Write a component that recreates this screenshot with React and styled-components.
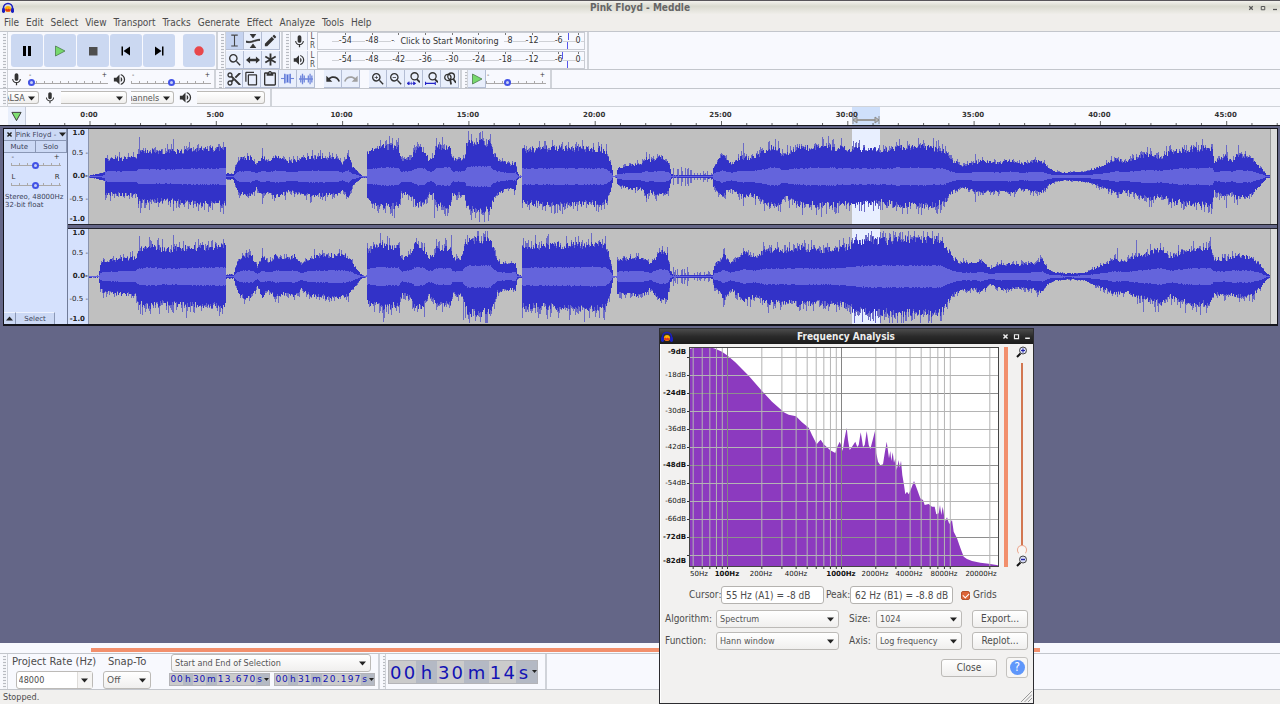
import { useState } from 'react';
import styled, { createGlobalStyle } from 'styled-components';
import { MdMic, MdVolumeUp, MdContentCut, MdContentCopy, MdContentPaste, MdEdit, MdSearch, MdZoomIn, MdZoomOut, MdUndo, MdRedo } from 'react-icons/md';

const MENU = ['File', 'Edit', 'Select', 'View', 'Transport', 'Tracks', 'Generate', 'Effect', 'Analyze', 'Tools', 'Help'];
const DB_MARKS = [-54, -48, -42, -36, -30, -24, -18, -12, -6];
// what is left of the marks beside the monitoring button
const MONITOR_MARKS = { '-42': '-', '-36': '', '-30': '', '-24': '', '-18': '8' };

// the clip starts at window pixel 89 and is 1181 samples wide
const CLIP_START = 89;
const CLIP_WIDTH = 1181;
const CHANNEL_HEIGHT = 95;
const MINUTE = 25.26;
const SELECTION = { start: 763, width: 28 };

// [position, peak height] pairs of each channel's outline
const LEFT_PEAKS = [
    [89, 1], [104, 4], [105, 18], [136, 19], [138, 26], [150, 26], [165, 25], [200, 28], [225, 28], [226, 3], [233, 3], [238, 17],
    [250, 20], [256, 12], [262, 20], [268, 15], [275, 21], [290, 15], [300, 18], [310, 20], [336, 19], [342, 13], [348, 21],
    [352, 10], [358, 4], [362, 1], [366, 1], [367, 25], [375, 27], [382, 31], [398, 30], [401, 17], [410, 19], [417, 30],
    [425, 27], [428, 17], [433, 19], [436, 30], [450, 31], [452, 18], [464, 18], [466, 32], [470, 35], [490, 35], [492, 26],
    [497, 18], [510, 12], [515, 14], [517, 4], [519, 1], [521, 1], [522, 27], [560, 29], [600, 28], [606, 26], [611, 12],
    [613, 1], [616, 1], [617, 8], [625, 11], [632, 13], [640, 12], [646, 20], [650, 16], [660, 20], [668, 15], [671, 3],
    [673, 1], [712, 2], [713, 10], [722, 22], [726, 16], [732, 13], [740, 20], [750, 19], [760, 23], [770, 30], [778, 29],
    [783, 21], [790, 25], [800, 29], [830, 30], [852, 28], [880, 27], [900, 30], [930, 30], [945, 26], [950, 17], [963, 11],
    [980, 16], [1000, 14], [1010, 17], [1020, 13], [1035, 16], [1043, 15], [1048, 9], [1055, 5], [1063, 4], [1085, 5],
    [1095, 8], [1105, 12], [1116, 18], [1125, 15], [1135, 19], [1150, 23], [1160, 20], [1170, 25], [1185, 28], [1212, 30],
    [1214, 15], [1225, 20], [1232, 16], [1236, 22], [1250, 20], [1256, 13], [1262, 7], [1266, 2], [1270, 1],
];
const RIGHT_PEAKS = [
    [89, 1], [98, 1], [100, 12], [103, 16], [120, 18], [135, 19], [138, 28], [150, 31], [165, 27], [180, 29], [225, 31],
    [226, 2], [233, 2], [238, 17], [245, 22], [252, 20], [257, 10], [262, 21], [268, 14], [275, 21], [285, 18], [295, 21],
    [301, 12], [310, 20], [336, 22], [345, 21], [350, 17], [355, 9], [360, 3], [363, 1], [366, 1], [367, 27], [380, 32],
    [398, 30], [402, 18], [410, 22], [415, 33], [424, 29], [428, 19], [433, 22], [436, 29], [450, 29], [453, 18], [462, 20],
    [465, 33], [468, 38], [490, 37], [493, 28], [497, 16], [505, 13], [515, 14], [517, 3], [519, 1], [521, 1], [522, 31],
    [560, 32], [600, 33], [606, 31], [611, 12], [613, 1], [616, 1], [617, 17], [632, 19], [640, 20], [650, 13], [660, 25],
    [667, 23], [670, 6], [673, 1], [712, 2], [714, 12], [720, 16], [723, 25], [730, 13], [738, 20], [745, 25], [755, 20],
    [765, 27], [785, 27], [800, 29], [820, 27], [848, 30], [855, 36], [880, 37], [900, 38], [940, 38], [945, 31], [952, 20],
    [960, 14], [975, 13], [980, 17], [990, 8], [1000, 13], [1020, 12], [1035, 14], [1042, 17], [1047, 8], [1055, 4],
    [1070, 3], [1085, 4], [1095, 9], [1105, 13], [1115, 18], [1125, 15], [1135, 20], [1145, 23], [1160, 28], [1170, 20],
    [1185, 27], [1210, 29], [1214, 18], [1225, 18], [1235, 21], [1250, 20], [1260, 12], [1266, 3], [1270, 1],
];
const LEFT_SPIKES = [
    [139, 40], [140, -36], [173, 38], [223, -37], [262, 29], [262, -27], [392, 39], [392, -39], [442, 40], [434, -41], [468, 46], [482, 46],
    [471, -43], [490, 43], [484, -45], [554, -37], [646, 25], [646, -25], [743, 34], [743, -29], [769, 36], [833, 38], [802, -38],
    [853, 36], [921, -38], [933, 39], [975, 23], [975, -25], [1202, 38], [1196, -33], [1226, 32], [1226, -31], [1238, 32],
];
const RIGHT_SPIKES = [
    [139, 41], [173, 42], [186, -41], [262, 29], [383, -45], [451, 42], [424, -40], [463, -43], [469, -46], [548, 43], [591, 44], [584, -45],
    [723, 28], [723, -30], [743, 29], [804, 37], [910, 42], [906, -44], [937, 41], [1117, 29], [1136, 37], [1143, -35], [1196, -35], [1206, 35],
];

// spectrum outline in pixels from the plot's corner, 3 units to a pixel
const SPECTRUM = [
    [0, 5], [16, 1], [61, 1], [76, 5], [96, 14], [113, 26], [136, 46], [176, 86], [216, 132], [246, 164], [275, 190], [281, 196],
    [296, 203], [318, 208], [336, 226], [356, 242], [366, 264], [380, 292], [386, 284], [392, 278], [401, 292], [421, 310],
    [436, 318], [442, 299], [449, 284], [454, 296], [458, 312], [463, 279], [470, 242], [474, 279], [479, 309], [488, 296],
    [496, 284], [502, 300], [506, 294], [512, 256], [516, 279], [519, 300], [524, 294], [530, 252], [536, 294], [541, 306],
    [548, 279], [555, 252], [559, 319], [564, 344], [571, 355], [579, 352], [584, 319], [590, 284], [594, 312], [597, 334],
    [601, 312], [604, 342], [608, 316], [612, 347], [616, 334], [620, 369], [626, 339], [629, 362], [633, 341], [637, 384],
    [642, 414], [646, 442], [651, 434], [656, 442], [664, 424], [672, 402], [680, 424], [691, 454], [699, 459], [704, 474],
    [716, 471], [726, 479], [734, 479], [739, 502], [746, 499], [750, 474], [754, 504], [758, 479], [762, 504], [764, 524],
    [771, 511], [778, 531], [786, 519], [791, 554], [801, 574], [811, 602], [821, 629], [831, 636], [846, 642], [871, 647],
    [896, 650], [924, 655],
];
const DB_LABELS = [['-9dB', 352, true], ['-18dB', 375], ['-24dB', 393, true], ['-30dB', 411], ['-36dB', 429], ['-42dB', 447], ['-48dB', 465, true], ['-54dB', 483], ['-60dB', 501], ['-66dB', 519], ['-72dB', 537, true], ['-82dB', 561, true]];
const HZ_LABELS = [['50Hz', 699], ['100Hz', 727, true], ['200Hz', 761], ['400Hz', 796], ['1000Hz', 841, true], ['2000Hz', 875], ['4000Hz', 909], ['8000Hz', 944], ['20000Hz', 981]];
const HZ_LINES = [50, 60, 70, 80, 90, 100, 200, 300, 400, 500, 600, 700, 800, 900, 1000, 2000, 3000, 4000, 5000, 6000, 7000, 8000, 9000, 20000];

const seeded = (seed) => () => {
    seed = (seed * 16807) % 2147483647;
    return seed / 2147483647;
};

const heightAt = (points, x) => {
    const i = points.findIndex(([px]) => px > x);
    if (i < 1) return i === 0 ? points[0][1] : points[points.length - 1][1];
    const [x0, y0] = points[i - 1];
    const [x1, y1] = points[i];
    return y0 + ((y1 - y0) * (x - x0)) / (x1 - x0);
};

// builds the peak, body and rms outlines of one channel
const buildWave = (points, spikes, seed) => {
    const rand = seeded(seed);
    const mid = CHANNEL_HEIGHT / 2;
    const paths = { peak: '', body: '', rms: '' };
    for (let x = 0; x < CLIP_WIDTH; x++) {
        const at = x + CLIP_START;
        const base = heightAt(points, at);
        let up = base * (0.85 + 0.23 * rand());
        let down = base * (0.84 + 0.23 * rand());
        let upPeak = up + base * 0.3 * Math.pow(rand(), 3);
        let downPeak = down + base * 0.35 * Math.pow(rand(), 3);
        // quiet passage with sparse clicks
        if (at > 672 && at < 712 && rand() > 0.55) {
            upPeak = at < 692 ? 3 + 7 * rand() : 2 + 4 * rand();
            downPeak = upPeak;
        }
        spikes.forEach(([sx, h]) => {
            if (sx !== at) return;
            if (h > 0) upPeak = h;
            else downPeak = -h;
        });
        const rms = Math.max(base * (0.27 + 0.04 * rand()), 0.5);
        upPeak = Math.min(upPeak, 46);
        downPeak = Math.min(downPeak, 46);
        const col = (a, b) => `M${x} ${(mid - a).toFixed(1)}h1V${(mid + b).toFixed(1)}h-1z`;
        paths.peak += col(upPeak, downPeak);
        paths.body += col(up, down);
        paths.rms += col(rms, rms);
    }
    return paths;
};

const CHANNELS = [buildWave(LEFT_PEAKS, LEFT_SPIKES, 71), buildWave(RIGHT_PEAKS, RIGHT_SPIKES, 1973)];

const Wave = ({ paths }) => (
    <WaveSvg viewBox={`0 0 ${CLIP_WIDTH} ${CHANNEL_HEIGHT}`} preserveAspectRatio="none" shapeRendering="crispEdges">
        <rect width={CLIP_WIDTH} height={CHANNEL_HEIGHT} fill="#c0c0c0" />
        <rect x={SELECTION.start} width={SELECTION.width} height={CHANNEL_HEIGHT} fill="#e8efff" />
        <path d={paths.peak} fill="#6a6ac6" />
        <path d={paths.body} fill="#3232c8" />
        <path d={paths.rms} fill="#6464dc" />
    </WaveSvg>
);

const Logo = () => (
    <svg width="12" height="12" viewBox="0 0 12 12">
        <path d="M1.5 7.5V6a4.5 4.5 0 0 1 9 0v1.500" fill="none" stroke="#1b1fc0" strokeWidth="1.600" />
        <circle cx="6" cy="7" r="3" fill="#ffb400" />
        <path d="M3 7.500l1.500-1 1 1 1-1 1.500 1 1-.5-.8 2.500H4z" fill="#e2361c" />
        <rect x="0" y="6" width="3" height="5" rx="1.400" fill="#1b1fc0" />
        <rect x="9" y="6" width="3" height="5" rx="1.400" fill="#1b1fc0" />
    </svg>
);

const Icon = ({ name, size = 12 }) => {
    const shapes = {
        pause: <path d="M2 1h3v10H2zM7 1h3v10H7z" fill="#000" />,
        play: <path d="M1.500 1L11 6l-9.500 5z" fill="#76d96c" stroke="#3f6f3f" strokeWidth=".7" />,
        stop: <path d="M2 2h8.500v8.500H2z" fill="#4e4e4e" />,
        start: <path d="M1.500 1.500h1.500v9H1.500zM10 1.500v9L3.500 6z" fill="#000" />,
        end: <path d="M9 1.500h1.500v9H9zM2 1.500v9L8.500 6z" fill="#000" />,
        record: <circle cx="6" cy="6" r="4.700" fill="#e8474b" />,
        ibeam: <path d="M3 1h2.500l.5.500.5-.5H9M3 11h2.500l.5-.5.5.500H9M6 1.500v9" fill="none" stroke="#444" />,
        envelope: <path d="M3.500 0h5L6 3.500zM3.500 12h5L6 8.500zM0 6c5 1.500 7-1.500 12-1.500v1c-5 0-7 3-12 1.500z" fill="#333" stroke="#333" strokeWidth=".6" />,
        shift: <path d="M0 6l3.500-3v2h5V3L12 6 8.500 9V7h-5v2z" fill="#333" />,
        multi: <path d="M6 .5v11M1.200 3.200l9.600 5.600M1.200 8.800l9.600-5.600" fill="none" stroke="#333" strokeWidth="1.700" />,
        trim: <><path d="M0 6h12" stroke="#6f86dc" /><path d="M3 2h6v8H3z" fill="#a9b9f0" /><path d="M3.500 1.500v9M6 2.500v7M8.500 1.500v9" stroke="#5570d2" /></>,
        silence: <path d="M0 6h12M1.500 3v6M3 1.500v9M4.500 3v6M8 3v6M9.500 1.500v9M11 3v6" stroke="#6f86dc" strokeWidth="1.100" />,
        zoomSel: <><circle cx="7" cy="4" r="3.300" fill="none" stroke="#333" strokeWidth="1.200" /><path d="M9 6.500l3 3" stroke="#333" strokeWidth="1.600" /><path d="M0 10.500h8M0 10.500l2-1.500v3zM4 9v3M8 10.500L6 9v3z" fill="#2323c8" stroke="#2323c8" strokeWidth=".6" /></>,
        zoomFit: <><circle cx="7" cy="4" r="3.300" fill="none" stroke="#333" strokeWidth="1.200" /><path d="M9 6.500l3 3" stroke="#333" strokeWidth="1.600" /><path d="M.5 9v3M9.500 9v3M.5 10.500h9" fill="none" stroke="#2323c8" /></>,
        zoomToggle: <><circle cx="4.500" cy="5" r="2.900" fill="none" stroke="#333" strokeWidth="1.200" /><circle cx="7.500" cy="4" r="3.100" fill="none" stroke="#333" strokeWidth="1.200" /><path d="M6.500 6.500l1 5M9.500 6.500l2.500 3.500" stroke="#333" strokeWidth="1.600" /></>,
        lens: <><path d="M1 11l3.500-3.500" stroke="#111" strokeWidth="2" /><circle cx="7" cy="4.500" r="3.500" fill="#d8dcf4" stroke="#444" /><path d="M5 4.500h4M7 2.500v4" stroke="#2323a8" strokeWidth="1.200" /></>,
        lensOut: <><path d="M1 11l3.500-3.500" stroke="#111" strokeWidth="2" /><circle cx="7" cy="4.500" r="3.500" fill="#d8dcf4" stroke="#444" /><path d="M5 4.500h4" stroke="#2323a8" strokeWidth="1.400" /></>,
        pin: <path d="M1 1.500h10L6 10.500z" fill="#7fe072" stroke="#333" />,
        close: <path d="M2.500 2.500l7 7M9.500 2.500l-7 7" stroke="#222" strokeWidth="2.500" />,
        max: <path d="M2.500 3h7v6.500h-7z" fill="none" stroke="#222" strokeWidth="2" />,
        min: <path d="M2 9h8" stroke="#222" strokeWidth="2.500" />,
        down: <path d="M0 2.500h12L6 9.500z" fill="#222" />,
        up: <path d="M0 9.500h12L6 2.500z" fill="#222" />,
    };
    return <svg width={size} height={size} viewBox="0 0 12 12">{shapes[name]}</svg>;
};

const Dropdown = ({ label, value, width, plain, indent }) => (
    <SelectWrap $width={width} $plain={plain} $indent={indent}>
        <select aria-label={label} defaultValue={value}>
            <option value={value}>{value}</option>
        </select>
        <Icon name="down" size={7} />
    </SelectWrap>
);

const Slider = ({ label, value, width, low = '-', high = '+' }) => (
    <SliderWrap $width={width}>
        <SliderMarks><span>{low}</span><span>{high}</span></SliderMarks>
        <Range type="range" aria-label={label} defaultValue={value} />
    </SliderWrap>
);

const Meter = ({ label, icon, marks, monitor }) => (
    <MeterRow>
        <MeterButton aria-label={label}>{icon}</MeterButton>
        <MeterSides><span>L</span><span>R</span></MeterSides>
        <MeterScale>
            {DB_MARKS.map((db) => {
                const text = monitor && db in MONITOR_MARKS ? MONITOR_MARKS[db] : db;
                return <MeterCell key={db} $edge={monitor && (text === '-' ? 'left' : text === '8' && 'right')}><span>{text}</span></MeterCell>;
            })}
            <MeterCell $last><span>0</span></MeterCell>
            <MeterPeak $right={marks[0]} />
            <MeterPeak $right={marks[1]} $lower />
            {monitor && <MonitorButton>Click to Start Monitoring</MonitorButton>}
        </MeterScale>
    </MeterRow>
);

const TimeField = ({ label, groups, big }) => (
    <TimeBox role="group" aria-label={label} $big={big}>
        {groups.map((text, i) => (
            <TimeGroup key={i} $text={text}>
                {text.split('').map((c, j) => <span key={j}>{c}</span>)}
            </TimeGroup>
        ))}
        <TimeMenu aria-label="Time format"><Icon name="down" size={5} /></TimeMenu>
    </TimeBox>
);

const TimeRuler = () => {
    const pct = (px) => `${(px / CLIP_WIDTH) * 100}%`;
    const minutes = Array.from({ length: 50 }, (_, i) => i - 2);
    return (
        <RulerSvg>
            <rect x={pct(SELECTION.start)} width={pct(SELECTION.width)} height="18" fill="#cfe0fb" />
            {minutes.map((m) => (
                <line key={m} x1={pct(m * MINUTE + 1)} x2={pct(m * MINUTE + 1)} y1={m % 5 === 0 ? 14 : 16} y2="18" stroke="#666" />
            ))}
            {minutes.filter((m) => m >= 0 && m % 5 === 0).map((m) => (
                <text key={m} x={pct(m * MINUTE)} y="10" textAnchor="middle">{`${m}:00`}</text>
            ))}
            <svg x={pct(SELECTION.start)} y="8" width="28" height="9" overflow="visible">
                <path d="M1 5h26" stroke="#9a9a9a" strokeWidth="2" />
                <path d="M1 1v8M1 5l4-3v6zM27 1v8M27 5l-4-3v6z" fill="#b5b5b5" stroke="#8c8c8c" />
            </svg>
        </RulerSvg>
    );
};

const hzToX = (hz) => 727.5 + Math.log10(hz / 100) * 114;

const SpectrumPlot = () => (
    <PlotSvg width="340" height="236" viewBox="661 345 340 236">
        <rect x="689.5" y="347.5" width="309" height="219" fill="#fff" />
        <path d={`M690 566V${347 + SPECTRUM[0][1] / 3}${SPECTRUM.map(([x, y]) => `L${(690 + x / 3).toFixed(1)} ${(347 + y / 3).toFixed(1)}`).join('')}L998 566z`} fill="#8c3abf" />
        {Array.from({ length: 12 }, (_, i) => 357.5 + i * 18).map((y, i) => (
            <line key={y} x1="690" x2="998" y1={y} y2={y} stroke={[2, 6, 10].includes(i) ? '#8e8e8e' : '#b4b4b4'} />
        ))}
        {HZ_LINES.map((hz) => (
            <line key={hz} x1={hzToX(hz)} x2={hzToX(hz)} y1="348" y2="566" stroke={hz === 100 || hz === 1000 ? '#858585' : '#b4b4b4'} />
        ))}
        {HZ_LINES.map((hz) => <line key={hz} x1={hzToX(hz)} x2={hzToX(hz)} y1="566" y2="569" stroke="#333" />)}
        {Array.from({ length: 12 }, (_, i) => 357.5 + i * 18).map((y) => <line key={y} x1="687" x2="690" y1={y} y2={y} stroke="#333" />)}
        <rect x="689.5" y="347.5" width="309" height="219" fill="none" stroke="#444" />
        {DB_LABELS.map(([text, y, bold]) => <PlotLabel key={text} x="686" y={y + 2} textAnchor="end" $bold={bold}>{text}</PlotLabel>)}
        {HZ_LABELS.map(([text, x, bold]) => <PlotLabel key={text} x={x} y="576" textAnchor="middle" $bold={bold}>{text}</PlotLabel>)}
    </PlotSvg>
);

const FrequencyDialog = () => {
    const [grids, setGrids] = useState(true);
    return (
        <Dialog role="dialog" aria-label="Frequency Analysis">
            <DialogTitle>
                <Logo />
                <h2>Frequency Analysis</h2>
                <WindowButtons $light>
                    <button aria-label="Close window"><Icon name="close" size={7} /></button>
                    <button aria-label="Maximize"><Icon name="max" size={7} /></button>
                    <button aria-label="Minimize"><Icon name="min" size={7} /></button>
                </WindowButtons>
            </DialogTitle>
            <PlotRow>
                <SpectrumPlot />
                <PanBar />
                <ZoomColumn>
                    <Icon name="lens" size={12} />
                    <ZoomTrack />
                    <ZoomKnob />
                    <Icon name="lensOut" size={12} />
                </ZoomColumn>
            </PlotRow>
            <CursorRow>
                <label htmlFor="cursor">Cursor:</label>
                <ReadOut id="cursor" readOnly value="55 Hz (A1) = -8 dB" />
                <label htmlFor="peak">Peak:</label>
                <ReadOut id="peak" readOnly value="62 Hz (B1) = -8.8 dB" />
                <GridsLabel>
                    <input type="checkbox" checked={grids} onChange={() => setGrids(!grids)} />
                    <span>Grids</span>
                </GridsLabel>
            </CursorRow>
            <OptionGrid>
                <span>Algorithm:</span>
                <Dropdown label="Algorithm" value="Spectrum" />
                <span>Size:</span>
                <Dropdown label="Size" value="1024" />
                <Button>Export...</Button>
                <span>Function:</span>
                <Dropdown label="Function" value="Hann window" />
                <span>Axis:</span>
                <Dropdown label="Axis" value="Log frequency" />
                <Button>Replot...</Button>
            </OptionGrid>
            <DialogActions>
                <Button>Close</Button>
                <HelpButton aria-label="Help"><span>?</span></HelpButton>
            </DialogActions>
            <Grip viewBox="0 0 12 12"><path d="M1 12L12 1M4.500 12L12 4.500M8 12l4-4" stroke="#999" /></Grip>
        </Dialog>
    );
};

const App = () => (
    <>
        <GlobalStyle />
        <Page>
            <TitleBar>
                <Logo />
                <h1>Pink Floyd - Meddle</h1>
                <WindowButtons>
                    <button aria-label="Close window"><Icon name="close" size={6} /></button>
                    <button aria-label="Maximize"><Icon name="max" size={6} /></button>
                    <button aria-label="Minimize"><Icon name="min" size={6} /></button>
                </WindowButtons>
            </TitleBar>
            <MenuBar>
                {MENU.map((item) => <button key={item}>{item}</button>)}
            </MenuBar>

            <ToolRow $height={38}>
                <Toolbar $width={218}>
                    <Grabber />
                    <Transport>
                        <BigButton aria-label="Pause"><Icon name="pause" size={12} /></BigButton>
                        <BigButton aria-label="Play"><Icon name="play" size={12} /></BigButton>
                        <BigButton aria-label="Stop"><Icon name="stop" size={12} /></BigButton>
                        <BigButton aria-label="Skip to Start"><Icon name="start" size={12} /></BigButton>
                        <BigButton aria-label="Skip to End"><Icon name="end" size={12} /></BigButton>
                        <BigButton aria-label="Record" $apart><Icon name="record" size={12} /></BigButton>
                    </Transport>
                </Toolbar>
                <Toolbar $width={65}>
                    <Grabber />
                    <ToolGrid>
                        <ToolButton aria-label="Selection" $on><Icon name="ibeam" size={13} /></ToolButton>
                        <ToolButton aria-label="Envelope"><Icon name="envelope" size={14} /></ToolButton>
                        <ToolButton aria-label="Draw"><MdEdit size={15} /></ToolButton>
                        <ToolButton aria-label="Zoom"><MdSearch size={16} /></ToolButton>
                        <ToolButton aria-label="Time Shift"><Icon name="shift" size={14} /></ToolButton>
                        <ToolButton aria-label="Multi"><Icon name="multi" size={13} /></ToolButton>
                    </ToolGrid>
                </Toolbar>
                <Toolbar $width={306}>
                    <Grabber />
                    <Meters>
                        <Meter label="Record meter" icon={<MdMic size={15} />} marks={[15, 16]} monitor />
                        <Meter label="Playback meter" icon={<MdVolumeUp size={14} />} marks={[21, 16]} />
                    </Meters>
                </Toolbar>
            </ToolRow>

            <ToolRow $height={19}>
                <Toolbar $width={216}>
                    <Grabber />
                    <Mixer>
                        <MdMic size={15} />
                        <Slider label="Recording volume" value={0} width={80} />
                        <MdVolumeUp size={15} />
                        <Slider label="Playback volume" value={50} width={80} />
                    </Mixer>
                </Toolbar>
                <Toolbar $width={246}>
                    <Grabber />
                    <EditTools>
                        <ToolButton aria-label="Cut"><MdContentCut size={16} /></ToolButton>
                        <ToolButton aria-label="Copy"><MdContentCopy size={15} /></ToolButton>
                        <ToolButton aria-label="Paste"><MdContentPaste size={16} /></ToolButton>
                        <ToolButton aria-label="Trim"><Icon name="trim" size={13} /></ToolButton>
                        <ToolButton aria-label="Silence"><Icon name="silence" size={14} /></ToolButton>
                    </EditTools>
                    <EditTools>
                        <ToolButton aria-label="Undo"><MdUndo size={16} /></ToolButton>
                        <ToolButton aria-label="Redo" $dim><MdRedo size={16} /></ToolButton>
                    </EditTools>
                    <EditTools>
                        <ToolButton aria-label="Zoom In"><MdZoomIn size={16} /></ToolButton>
                        <ToolButton aria-label="Zoom Out"><MdZoomOut size={16} /></ToolButton>
                        <ToolButton aria-label="Fit Selection"><Icon name="zoomSel" size={13} /></ToolButton>
                        <ToolButton aria-label="Fit Project"><Icon name="zoomFit" size={13} /></ToolButton>
                        <ToolButton aria-label="Zoom Toggle"><Icon name="zoomToggle" size={13} /></ToolButton>
                    </EditTools>
                </Toolbar>
                <Toolbar $width={90}>
                    <Grabber $slim />
                    <ToolButton aria-label="Play at Speed"><Icon name="play" size={12} /></ToolButton>
                    <Slider label="Playback speed" value={34} width={60} />
                </Toolbar>
            </ToolRow>

            <ToolRow $height={18}>
                <Toolbar $width={272}>
                    <Grabber />
                    <Devices>
                        <Dropdown label="Audio host" value="ALSA" indent={-4} width={31} plain />
                        <MdMic size={14} />
                        <Dropdown label="Recording device" value="" width={66} plain />
                        <Dropdown label="Recording channels" value="channels" indent={-8} width={43} plain />
                        <MdVolumeUp size={15} />
                        <Dropdown label="Playback device" value="" width={68} plain />
                    </Devices>
                </Toolbar>
            </ToolRow>

            <Timeline>
                <PinButton aria-label="Pin play head"><Icon name="pin" size={11} /></PinButton>
                <TimeRuler />
            </Timeline>

            <Workspace>
                <Track>
                    <TrackPanel>
                        <TrackHead>
                            <button aria-label="Close track"><Icon name="close" size={7} /></button>
                            <button>Pink Floyd -<Icon name="down" size={7} /></button>
                        </TrackHead>
                        <TrackHead $even>
                            <button>Mute</button>
                            <button>Solo</button>
                        </TrackHead>
                        <TrackSliders>
                            <Slider label="Gain" value={50} width={50} />
                            <Slider label="Pan" value={50} width={50} low="L" high="R" />
                        </TrackSliders>
                        <TrackInfo>Stereo, 48000Hz<br />32-bit float</TrackInfo>
                        <TrackFoot>
                            <button aria-label="Collapse"><Icon name="up" size={7} /></button>
                            <button>Select</button>
                        </TrackFoot>
                    </TrackPanel>
                    <ChannelList>
                        {CHANNELS.map((paths, i) => (
                            <Channel key={i}>
                                <AmpRuler>
                                    <b>1.0</b>
                                    <span>0.5 -</span>
                                    <b>0.0-</b>
                                    <span>-0.5 -</span>
                                    <b>-1.0</b>
                                </AmpRuler>
                                <Wave paths={paths} />
                                <ClipEnd />
                            </Channel>
                        ))}
                    </ChannelList>
                </Track>
            </Workspace>

            <ScrollRow><ScrollThumb /></ScrollRow>

            <SelectionRow>
                <Toolbar $width={380}>
                    <Grabber />
                    <RateField>
                        <label htmlFor="rate">Project Rate (Hz)</label>
                        <Combo>
                            <input id="rate" defaultValue="48000" />
                            <button aria-label="Choose rate"><Icon name="down" size={7} /></button>
                        </Combo>
                    </RateField>
                    <RateField>
                        <span>Snap-To</span>
                        <Dropdown label="Snap-To" value="Off" width={48} />
                    </RateField>
                    <RangeFields>
                        <Dropdown label="Selection format" value="Start and End of Selection" width={200} />
                        <div>
                            <TimeField label="Selection start" groups={['00', 'h', '30', 'm', '13.670', 's']} />
                            <TimeField label="Selection end" groups={['00', 'h', '31', 'm', '20.197', 's']} />
                        </div>
                    </RangeFields>
                </Toolbar>
                <Toolbar $width={167}>
                    <Grabber $slim />
                    <TimeField label="Audio position" groups={['00', 'h', '30', 'm', '14', 's']} big />
                </Toolbar>
            </SelectionRow>
            <StatusBar>Stopped.</StatusBar>

            <FrequencyDialog />
        </Page>
    </>
);

const GlobalStyle = createGlobalStyle`
    * {
        box-sizing: border-box;
    }
    body {
        margin: 0;
        font-family: "DejaVu Sans Condensed", "DejaVu Sans", sans-serif;
        font-size: 10px;
        line-height: 12px;
        color: #4c4c4c;
        background: #646687;
    }
    button, input, select {
        font: inherit;
        color: inherit;
        margin: 0;
        padding: 0;
        border: 0;
        background: none;
        min-width: 0;
    }
    svg {
        flex-shrink: 0;
        display: block;
    }
`;

const Page = styled.div`
    position: relative;
    display: flex;
    flex-direction: column;
    min-height: 100vh;
    overflow: hidden;
`;

const TitleBar = styled.header`
    display: grid;
    grid-template-columns: 1fr auto 1fr;
    align-items: center;
    height: 14px;
    padding: 0 2px;
    border-top: 1px solid #57555a;
    background: linear-gradient(#f3f2ed, #d9dacf 40%, #efede9);
    h1 {
        margin: 0;
        font-size: 10px;
        line-height: 12px;
        color: #666;
    }
`;

const WindowButtons = styled.div`
    display: flex;
    justify-content: flex-end;
    gap: ${({ $light }) => ($light ? 4 : 6)}px;
    button {
        display: flex;
    }
    path {
        stroke: ${({ $light }) => ($light ? '#eee' : '#555')};
    }
`;

const MenuBar = styled.nav`
    display: flex;
    align-items: center;
    gap: 7px;
    height: 17px;
    padding-left: 4px;
    background: #f0eeeb;
`;

const ToolRow = styled.div`
    display: flex;
    height: ${({ $height }) => $height}px;
    background: #f8f9fe;
    border-top: 1px solid #c3c6cc;
`;

const Toolbar = styled.div`
    display: flex;
    align-items: center;
    width: ${({ $width }) => $width}px;
    border-right: 2px solid #d0d3d9;
`;

const Grabber = styled.div`
    align-self: stretch;
    flex: none;
    width: ${({ $slim }) => ($slim ? 6 : 8)}px;
    border-right: 1px solid #d0d3d9;
    background: repeating-linear-gradient(#b8bbc2 0 1px, #f2f3f7 1px 3px) 3px 2px / 3px 100% no-repeat;
`;

const Transport = styled.div`
    display: flex;
    gap: 1px;
    padding-left: 3px;
`;

const BigButton = styled.button`
    display: grid;
    place-items: center;
    width: 32px;
    height: 33px;
    margin-left: ${({ $apart }) => ($apart ? 7 : 0)}px;
    border-radius: 3px;
    background: #cbd8f1;
`;

const ToolGrid = styled.div`
    display: grid;
    grid-template-columns: repeat(3, 18px);
    gap: 1px 0;
    color: #333;
`;

const ToolButton = styled.button`
    display: grid;
    place-items: center;
    width: 18px;
    height: 18px;
    flex: none;
    border-right: 1px solid #b3bdd4;
    border-bottom: 1px solid #b3bdd4;
    background: ${({ $on }) => ($on ? '#c5d3f0' : '#e9effc')};
    color: ${({ $dim }) => ($dim ? '#a0a0a0' : '#333')};
`;

const EditTools = styled.div`
    display: flex;
    padding-left: 1px;
    margin-right: 8px;
`;

const Meters = styled.div`
    flex: 1;
    display: grid;
    gap: 1px;
`;

const MeterRow = styled.div`
    display: flex;
    height: 18px;
    margin-right: 2px;
`;

const MeterButton = styled.button`
    display: grid;
    place-items: center;
    width: 17px;
    border-right: 1px solid #c5cbdb;
    background: #f2f5fc;
    color: #333;
`;

const MeterSides = styled.div`
    display: flex;
    flex-direction: column;
    width: 9px;
    font-size: 8px;
    line-height: 9px;
    text-align: center;
`;

const MeterScale = styled.div`
    position: relative;
    flex: 1;
    display: flex;
    padding-left: 14px;
    border: 1px solid #c9ccd3;
    font-family: "DejaVu Sans", sans-serif;
    font-size: 8px;
    line-height: 8px;
    color: #333;
`;

const MeterCell = styled.div`
    flex: ${({ $last }) => ($last ? '0 0 12px' : '1')};
    display: flex;
    align-items: center;
    background: linear-gradient(#777, #777) center top / 1px 2px no-repeat;
    &::before, &::after {
        content: '';
        flex: 1;
        height: 1px;
        background: #cfd1d6;
    }
    &::before {
        ${({ $edge }) => $edge === 'left' && 'flex: 0 0 6px;'}
    }
    &::after {
        ${({ $edge }) => $edge === 'right' && 'flex: 0 0 6px;'}
    }
`;

const MeterPeak = styled.i`
    position: absolute;
    right: ${({ $right }) => $right}px;
    top: ${({ $lower }) => ($lower ? 9 : 0)}px;
    width: 1px;
    height: 7px;
    background: #5757ec;
`;

const MonitorButton = styled.button`
    position: absolute;
    left: 77px;
    top: 3px;
    width: 109px;
    background: #f8f9fe;
    font-family: "DejaVu Sans Condensed", "DejaVu Sans", sans-serif;
    font-size: 9px;
    line-height: 11px;
    text-align: center;
    white-space: nowrap;
`;

const Mixer = styled.div`
    display: flex;
    align-items: center;
    gap: 4px;
    padding-left: 1px;
    color: #333;
`;

const SliderWrap = styled.div`
    display: flex;
    flex-direction: column;
    width: ${({ $width }) => $width}px;
`;

const SliderMarks = styled.div`
    display: flex;
    justify-content: space-between;
    height: 7px;
    padding: 0 1px;
    font-size: 7px;
    line-height: 7px;
    color: #333;
`;

const Range = styled.input`
    appearance: none;
    display: block;
    width: 100%;
    height: 8px;
    background:
        linear-gradient(#aaa8a8, #aaa8a8) 0 4px / 100% 1px no-repeat,
        repeating-linear-gradient(90deg, #aaa8a8 0 1px, transparent 1px 8px) 0 2px / 100% 2px no-repeat;
    &::-webkit-slider-thumb {
        appearance: none;
        width: 7px;
        height: 7px;
        border: 2px solid #4353e6;
        border-radius: 50%;
        background: #c8d0f4;
    }
`;

const Devices = styled.div`
    display: flex;
    align-items: center;
    gap: 4px;
    color: #333;
`;

const SelectWrap = styled.div`
    display: grid;
    align-items: center;
    width: ${({ $width }) => ($width ? `${$width}px` : 'auto')};
    height: ${({ $plain }) => ($plain ? 13 : 18)}px;
    border: 1px solid #bcbab7;
    border-left-width: ${({ $plain }) => ($plain ? 0 : 1)}px;
    border-radius: ${({ $plain }) => ($plain ? '0 3px 3px 0' : '3px')};
    background: linear-gradient(#fff, #f0efee);
    font-size: 9px;
    color: #555;
    overflow: hidden;
    select {
        grid-area: 1 / 1;
        appearance: none;
        width: 100%;
        height: 100%;
        padding-left: ${({ $plain }) => ($plain ? 0 : 3)}px;
        text-indent: ${({ $indent }) => $indent || 0}px;
        outline: none;
    }
    svg {
        grid-area: 1 / 1;
        justify-self: end;
        margin-right: ${({ $plain }) => ($plain ? 3 : 4)}px;
        pointer-events: none;
    }
`;

const Timeline = styled.div`
    display: flex;
    height: 19px;
    padding-right: 10px;
    background: #f9faff;
    border-top: 1px solid #d0d3d9;
    overflow: hidden;
`;

const PinButton = styled.button`
    display: grid;
    place-items: center;
    flex: none;
    width: 18px;
    margin: 0 63px 0 8px;
    background: #e9effc;
    border-right: 1px solid #c5cbdb;
`;

const RulerSvg = styled.svg`
    flex: 1;
    width: 100%;
    height: 18px;
    overflow: visible;
    font-family: "DejaVu Sans", sans-serif;
    font-size: 7px;
    font-weight: bold;
    fill: #333;
`;

const Workspace = styled.main`
    flex: 1;
    padding: 2px 2px 0 3px;
    border-top: 1px solid #16161c;
    background: #646687;
`;

const Track = styled.section`
    display: flex;
    border: 1px solid #14141c;
    border-bottom-width: 2px;
    background: #d5e1fd;
`;

const TrackPanel = styled.div`
    display: flex;
    flex-direction: column;
    width: 63px;
    font-family: "DejaVu Sans", sans-serif;
    font-size: 7px;
    line-height: 8px;
    color: #3a4258;
`;

const TrackHead = styled.div`
    display: grid;
    grid-template-columns: ${({ $even }) => ($even ? '1fr 1fr' : '12px 1fr')};
    height: 12px;
    button {
        display: flex;
        align-items: center;
        justify-content: center;
        gap: 3px;
        border-right: 1px solid #8a97b5;
        border-bottom: 1px solid #8a97b5;
        background: #ccd9f5;
        white-space: nowrap;
    }
`;

const TrackSliders = styled.div`
    display: grid;
    justify-content: center;
    gap: 5px;
    padding-top: 1px;
`;

const TrackInfo = styled.div`
    padding: 4px 0 0 1px;
    white-space: nowrap;
`;

const TrackFoot = styled.div`
    display: grid;
    grid-template-columns: 12px 39px;
    height: 12px;
    margin-top: auto;
    button {
        display: grid;
        place-items: center;
        border-right: 1px solid #8a97b5;
        background: #ccd9f5;
        border-top: 1px solid #eef3ff;
    }
`;

const ChannelList = styled.div`
    flex: 1;
    display: grid;
    gap: 5px;
    border-left: 1px solid #717c98;
    background: linear-gradient(#22222c, #22222c) 0 95px / 100% 1px no-repeat, linear-gradient(#22222c, #22222c) 0 99px / 100% 1px no-repeat, #646687;
`;

const Channel = styled.div`
    display: flex;
    height: 95px;
`;

const AmpRuler = styled.div`
    display: grid;
    grid-template-rows: 9px 30px 16px 31px 9px;
    align-items: center;
    flex: none;
    width: 21px;
    border-right: 1px solid #8a93ab;
    background: #d5e1fd;
    font-family: "DejaVu Sans", sans-serif;
    font-size: 7px;
    line-height: 9px;
    text-align: right;
    white-space: nowrap;
    color: #222;
    b:first-child, b:last-child {
        padding-right: 3px;
    }
`;

const WaveSvg = styled.svg`
    flex: 1;
    width: 100%;
    height: 100%;
`;

const ClipEnd = styled.div`
    width: 7px;
    border-left: 1px solid #999;
    background: #dadada;
`;

const ScrollRow = styled.div`
    height: 10px;
    padding: 5px 240px 0 91px;
    background: #f8f9fe;
`;

const ScrollThumb = styled.div`
    height: 4px;
    background: #f28f6c;
`;

const SelectionRow = styled.div`
    display: flex;
    height: 37px;
    border-top: 1px solid #c3c6cc;
    border-bottom: 1px solid #c3c6cc;
    background: #f8f9fe;
`;

const RateField = styled.div`
    align-self: stretch;
    display: flex;
    flex-direction: column;
    justify-content: space-between;
    align-items: center;
    margin-left: 4px;
    padding-top: 2px;
    font-family: "DejaVu Sans", sans-serif;
    white-space: nowrap;
    & + & {
        margin-left: 7px;
    }
`;

const Combo = styled.div`
    display: flex;
    width: 77px;
    height: 18px;
    border: 1px solid #bcbab7;
    border-radius: 3px;
    background: #fff;
    font-family: "DejaVu Sans Condensed", "DejaVu Sans", sans-serif;
    font-size: 9px;
    input {
        flex: 1;
        padding-left: 2px;
    }
    button {
        display: grid;
        place-items: center;
        width: 15px;
        border-left: 1px solid #dedcd9;
        background: #f5f4f3;
    }
`;

const RangeFields = styled.div`
    align-self: stretch;
    display: flex;
    flex-direction: column;
    gap: 1px;
    margin-left: 20px;
    > div:last-child {
        display: flex;
        gap: 4px;
        margin-left: -2px;
    }
`;

const TimeBox = styled.div`
    display: flex;
    width: ${({ $big }) => ($big ? 150 : 101)}px;
    height: ${({ $big }) => ($big ? 24 : 13)}px;
    margin-left: ${({ $big }) => ($big ? 2 : 0)}px;
    border: 1px solid #b4b4b8;
    font-family: "DejaVu Sans", sans-serif;
    font-size: ${({ $big }) => ($big ? 18 : 9)}px;
    line-height: ${({ $big }) => ($big ? 23 : 11)}px;
    color: #1212b4;
    background: #cbcbcb;
`;

const UNIT_SHARE = { h: 1.5, m: 1.8, s: 1.1 };

const TimeGroup = styled.div`
    flex: ${({ $text }) => UNIT_SHARE[$text] || $text.length} 1 0;
    display: flex;
    justify-content: space-around;
    min-width: 0;
    background: ${({ $text }) => (UNIT_SHARE[$text] ? '#b4b9c4' : '#cbcbcb')};
`;

const TimeMenu = styled.button`
    display: grid;
    place-items: center;
    width: 6px;
    background: #b4b9c4;
`;

const StatusBar = styled.footer`
    height: 14px;
    padding: 1px 3px;
    font-size: 9px;
    background: #f1f0ee;
`;

const Dialog = styled.section`
    position: absolute;
    left: 659px;
    bottom: 0;
    width: 375px;
    height: 376px;
    display: flex;
    flex-direction: column;
    border: 1px solid #2c2c30;
    background: #f2f1f0;
    box-shadow: inset 1px 0 #fff;
`;

const DialogTitle = styled.header`
    display: grid;
    grid-template-columns: 1fr auto 1fr;
    align-items: center;
    height: 15px;
    padding: 0 2px 0 1px;
    background: linear-gradient(#4b4b4b, #2a2a2a 50%, #1b1b1b);
    h2 {
        margin: 0;
        font-size: 10px;
        line-height: 14px;
        color: #eee;
    }
`;

const PlotRow = styled.div`
    display: flex;
    padding: 1px 0 0 1px;
`;

const PlotSvg = styled.svg`
    font-family: "DejaVu Sans", sans-serif;
    font-size: 7px;
`;

const PlotLabel = styled.text`
    fill: #111;
    font-weight: ${({ $bold }) => ($bold ? 'bold' : 'normal')};
`;

const PanBar = styled.div`
    width: 4px;
    height: 220px;
    margin: 2px 8px 0 3px;
    background: #f28f6c;
`;

const ZoomColumn = styled.div`
    display: flex;
    flex-direction: column;
    align-items: center;
    padding-top: 1px;
`;

const ZoomTrack = styled.div`
    width: 2px;
    height: 182px;
    margin-top: 5px;
    background: #d27651;
`;

const ZoomKnob = styled.div`
    width: 10px;
    height: 10px;
    border: 1px solid #eba48a;
    border-bottom-color: transparent;
    border-radius: 50%;
    background: #f8f5f3;
`;

const CursorRow = styled.div`
    display: flex;
    align-items: center;
    height: 18px;
    margin-top: 5px;
    padding-left: 29px;
    label {
        flex: none;
        width: 32px;
        white-space: nowrap;
    }
    label + input + label {
        width: 24px;
        margin-left: 2px;
    }
`;

const ReadOut = styled.input`
    && {
        flex: none;
        width: 103px;
        height: 18px;
        padding-left: 4px;
        border: 1px solid #b5b3b0;
        border-radius: 3px;
        background: #fff;
    }
`;

const GridsLabel = styled.label`
    && {
        display: flex;
        align-items: center;
        gap: 3px;
        width: auto;
        margin-left: 8px;
    }
    input {
        appearance: none;
        flex: none;
        display: grid;
        place-items: center;
        width: 9px;
        height: 9px;
        border-radius: 2px;
        border: 1px solid #b5532c;
        background: #fff;
    }
    input:checked {
        background: #dd6437;
    }
    input:checked::after {
        content: '';
        width: 5px;
        height: 3px;
        border: solid #fff;
        border-width: 0 0 1px 1px;
        rotate: -45deg;
    }
`;

const OptionGrid = styled.div`
    display: grid;
    grid-template-columns: 51px 123px 37px 86px 66px;
    row-gap: 4px;
    align-items: center;
    margin-top: 6px;
    padding-left: 5px;
    > span:nth-child(5n + 3) {
        padding-left: 10px;
    }
    > button {
        margin-left: 10px;
    }
`;

const Button = styled.button`
    width: 56px;
    height: 18px;
    border: 1px solid #bcbab7;
    border-radius: 3px;
    background: linear-gradient(#fff, #f0efee);
`;

const DialogActions = styled.div`
    display: flex;
    justify-content: flex-end;
    align-items: center;
    gap: 9px;
    margin: 7px 5px 0 0;
`;

const HelpButton = styled.button`
    display: grid;
    place-items: center;
    width: 22px;
    height: 21px;
    border: 1px solid #c4c2bf;
    border-radius: 3px;
    background: #f8f7f6;
    span {
        width: 15px;
        height: 15px;
        border-radius: 50%;
        background: #5f97fb;
        color: #fff;
        font-size: 12px;
        line-height: 15px;
    }
`;

const Grip = styled.svg`
    width: 12px;
    height: 12px;
    margin: auto 1px 1px auto;
`;

export default App;
